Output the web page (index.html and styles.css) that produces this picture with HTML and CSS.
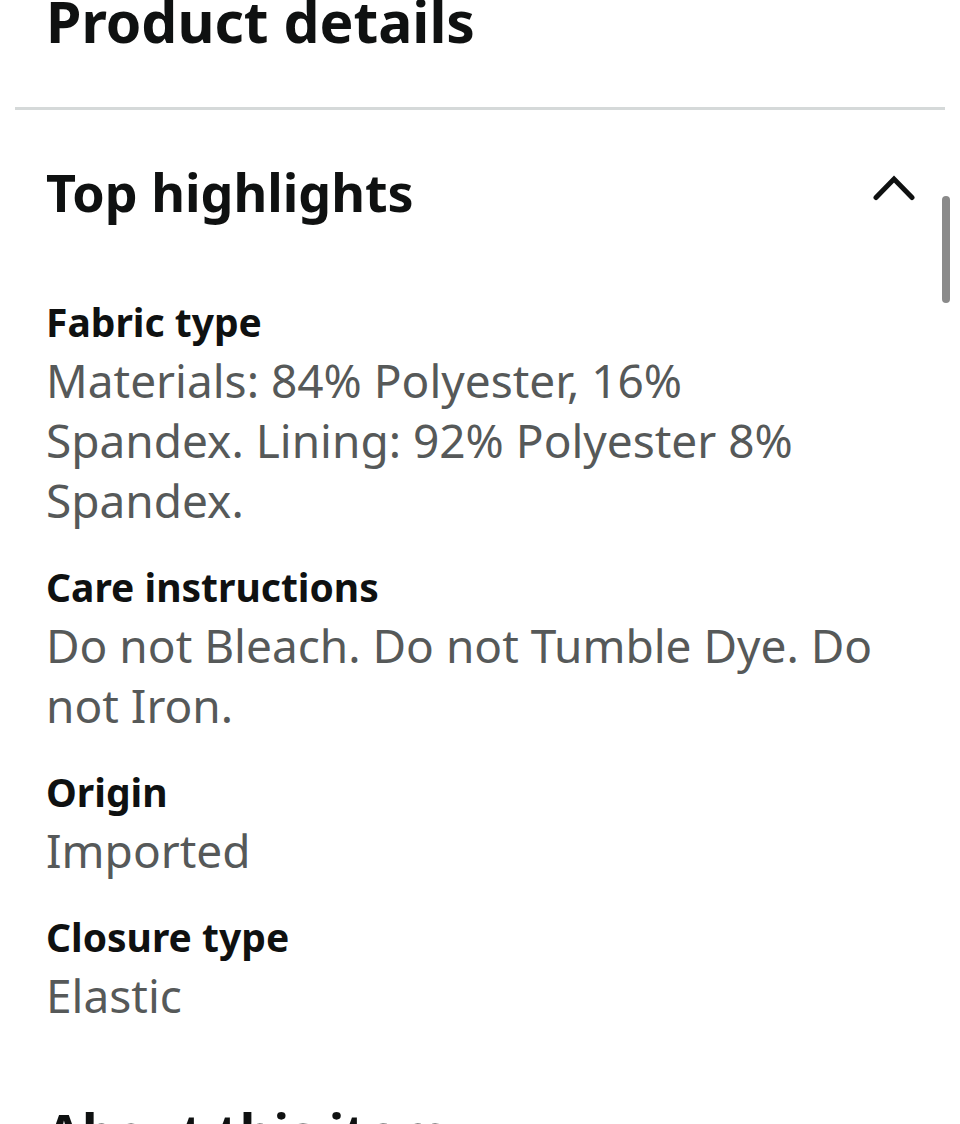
FILE: index.html
```html
<!DOCTYPE html>
<html lang="en">
<head>
<meta charset="utf-8">
<title>Product details</title>
<link rel="stylesheet" href="styles.css">
</head>
<body>
<div class="page">
  <h1 class="page-title">Product details</h1>
  <div class="divider"></div>
  <section class="highlights">
    <div class="section-head">
      <h2 class="section-title">Top highlights</h2>
      <svg class="chevron" width="42" height="28" viewBox="0 0 42 28" aria-hidden="true">
        <polyline points="3,24.5 21,6 39,24.5" fill="none" stroke="#0f1111" stroke-width="5" stroke-linecap="round" stroke-linejoin="miter"/>
      </svg>
    </div>
    <dl class="attrs">
      <div class="attr">
        <dt class="attr-label">Fabric type</dt>
        <dd class="attr-value">Materials: 84% Polyester, 16% Spandex. Lining: 92% Polyester 8% Spandex.</dd>
      </div>
      <div class="attr">
        <dt class="attr-label">Care instructions</dt>
        <dd class="attr-value">Do not Bleach. Do not Tumble Dye. Do not Iron.</dd>
      </div>
      <div class="attr">
        <dt class="attr-label">Origin</dt>
        <dd class="attr-value">Imported</dd>
      </div>
      <div class="attr">
        <dt class="attr-label">Closure type</dt>
        <dd class="attr-value">Elastic</dd>
      </div>
    </dl>
  </section>
  <h2 class="section-title about">About this item</h2>
  <div class="scrollbar"></div>
</div>
</body>
</html>
```
FILE: styles.css
```css
html, body {
  margin: 0;
  padding: 0;
  background: #ffffff;
}
body {
  font-family: "Noto Sans", "Open Sans", sans-serif;
  color: #0f1111;
  overflow: hidden;
  height: 1124px;
}
.page {
  position: relative;
  width: 960px;
  height: 1124px;
  overflow: hidden;
}
.page-title {
  margin: -9px 0 0 46px;
  font-size: 57px;
  line-height: 60px;
  font-weight: 700;
}
.divider {
  height: 3px;
  margin: 56px 15px 0 15px;
  background: #d5d9d9;
}
.highlights {
  padding: 0 45px 0 46px;
}
.section-head {
  display: flex;
  align-items: flex-start;
  justify-content: space-between;
  margin-top: 52px;
}
.section-title {
  margin: 0;
  font-size: 52px;
  line-height: 60px;
  font-weight: 700;
}
.chevron {
  display: block;
  margin-top: 11px;
}
.attrs {
  margin: 77px 35px 0 0;
  display: flex;
  flex-direction: column;
  gap: 34px;
}
.attr {
  display: flex;
  flex-direction: column;
}
.attr-label {
  font-size: 39px;
  line-height: 46px;
  font-weight: 700;
}
.attr-value {
  margin: 5px 0 0 0;
  font-size: 46px;
  line-height: 60px;
  color: #565959;
}
.about {
  margin: 77px 0 0 46px;
}
.scrollbar {
  position: absolute;
  left: 942px;
  top: 196px;
  width: 8px;
  height: 107px;
  border-radius: 4px;
  background: #8a8a8a;
}
```
